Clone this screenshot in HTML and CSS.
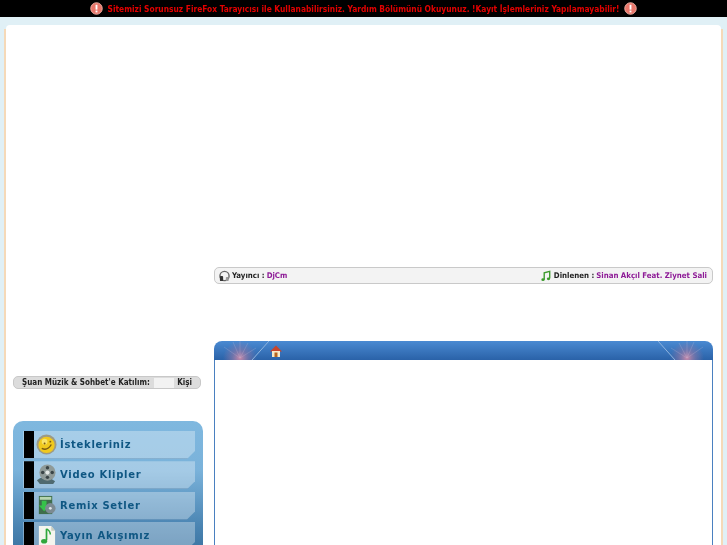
FILE: index.html
```html
<!DOCTYPE html>
<html lang="tr">
<head>
<meta charset="utf-8">
<title>Radyo</title>
<link rel="stylesheet" href="styles.css">
</head>
<body>
<div class="notice">
  <svg class="alert" viewBox="0 0 14 14"><circle cx="7" cy="7" r="6.2" fill="#e8766a" stroke="#f3b3a8"/><rect x="6" y="3" width="2" height="5.2" fill="#fff"/><rect x="6" y="9.2" width="2" height="2" fill="#fff"/></svg>
  <span>Sitemizi Sorunsuz FireFox Tarayıcısı ile Kullanabilirsiniz. Yardım Bölümünü Okuyunuz. !Kayıt İşlemleriniz Yapılamayabilir!</span>
  <svg class="alert" viewBox="0 0 14 14"><circle cx="7" cy="7" r="6.2" fill="#e8766a" stroke="#f3b3a8"/><rect x="6" y="3" width="2" height="5.2" fill="#fff"/><rect x="6" y="9.2" width="2" height="2" fill="#fff"/></svg>
</div>
<div class="sheet">
  <aside class="side">
    <div class="count">
      <span>Şuan Müzik &amp; Sohbet'e Katılım:</span>
      <span class="count-box"></span>
      <span>Kişi</span>
    </div>
    <nav class="menu">
      <a class="item">
        <i class="stub"></i>
        <svg class="ico" viewBox="0 0 22 22"><circle cx="11" cy="11" r="10.500" fill="#9c9a86"/><circle cx="11" cy="11.500" r="8.500" fill="#f0c91e"/><circle cx="9" cy="8" r="3" fill="#f8e46a"/><path d="M6 15q6 3 10-4" fill="none" stroke="#7a5a10" stroke-width="1.500"/><circle cx="9" cy="10" r="1" fill="#7a5a10"/><circle cx="15" cy="8" r="1" fill="#7a5a10"/></svg>
        <span>İstekleriniz</span>
      </a>
      <a class="item">
        <i class="stub"></i>
        <svg class="ico" viewBox="0 0 22 22"><path d="M1 17q5-5 14-2l5 3-2 3H4z" fill="#4f6a70"/><circle cx="12" cy="9" r="8.500" fill="#8f9a98"/><circle cx="12" cy="9" r="2.200" fill="#e4e8e6"/><circle cx="12" cy="4" r="1.800" fill="#3a4446"/><circle cx="7" cy="9" r="1.800" fill="#3a4446"/><circle cx="17" cy="9" r="1.800" fill="#3a4446"/><circle cx="12" cy="14" r="1.800" fill="#3a4446"/></svg>
        <span>Video Klipler</span>
      </a>
      <a class="item">
        <i class="stub"></i>
        <svg class="ico" viewBox="0 0 22 22"><rect x="3" y="1" width="14" height="19" fill="#3f6e4c"/><rect x="4" y="2" width="12" height="3" fill="#b7d6b0"/><path d="M6 6h5v5h3l-5.500 6-5.500-6h3z" fill="#36c24a"/><circle cx="15" cy="14" r="5.500" fill="#7c8a92"/><circle cx="15" cy="14" r="1.500" fill="#dfe5e8"/></svg>
        <span>Remix Setler</span>
      </a>
      <a class="item">
        <i class="stub"></i>
        <svg class="ico" viewBox="0 0 22 22"><path d="M3 1h13l4 5v15H3z" fill="#f4f5ee"/><path d="M16 1v5h4z" fill="#c9cdbf"/><path d="M11 4v12" stroke="#2fa73c" stroke-width="1.800"/><ellipse cx="8.500" cy="17" rx="3.200" ry="2.400" fill="#2fa73c"/><path d="M11 4q4 2 4 6" fill="none" stroke="#2fa73c" stroke-width="1.600"/></svg>
        <span>Yayın Akışımız</span>
      </a>
    </nav>
  </aside>
  <main class="main">
    <div class="player">
      <div class="player-part">
        <svg class="p-ico" viewBox="0 0 12 12"><circle cx="6" cy="6" r="5" fill="none" stroke="#666" stroke-width="1.500"/><rect x="1" y="6" width="3.500" height="5.500" rx="1" fill="#333"/><rect x="7.500" y="7" width="3" height="4.500" rx="1" fill="#999"/></svg>
        <b>Yayıncı :</b> <em>DjCm</em>
      </div>
      <div class="player-part">
        <svg class="p-ico" viewBox="0 0 12 12"><path d="M3.500 10V2.500l6-1.500v7.500" fill="none" stroke="#3c9a2c" stroke-width="1.500"/><ellipse cx="2.200" cy="10" rx="1.800" ry="1.500" fill="#3c9a2c"/><ellipse cx="8.200" cy="9" rx="1.800" ry="1.500" fill="#3c9a2c"/></svg>
        <b>Dinlenen :</b> <em>Sinan Akçıl Feat. Ziynet Sali</em>
      </div>
    </div>
    <section class="panel">
      <header class="panel-head">
        <div class="flare">
          <svg viewBox="0 0 55 19" preserveAspectRatio="none"><defs><radialGradient id="fl" cx="26" cy="17" r="17" gradientUnits="userSpaceOnUse"><stop offset="0" stop-color="#c98aaa"/><stop offset=".5" stop-color="#8a78a8" stop-opacity=".6"/><stop offset="1" stop-color="#8a78a8" stop-opacity="0"/></radialGradient></defs><rect width="55" height="19" fill="url(#fl)"/><path d="M26 17L10 6M26 17L19 1M26 17L26 0M26 17L34 2M26 17L42 7" stroke="#c8bcd8" stroke-opacity=".25"/><path d="M55 0L38 19" stroke="#8fb4de" stroke-width="1"/></svg>
        </div>
        <svg class="home" viewBox="0 0 12 12"><path d="M0 6.500L6 .5l6 6z" fill="#c8452c"/><rect x="2" y="6" width="8" height="6" fill="#f6e9c8"/><rect x="4.500" y="7.500" width="3" height="4.500" fill="#b5651d"/></svg>
        <div class="flare flip">
          <svg viewBox="0 0 55 19" preserveAspectRatio="none"><rect width="55" height="19" fill="url(#fl)"/><path d="M26 17L10 6M26 17L19 1M26 17L26 0M26 17L34 2M26 17L42 7" stroke="#c8bcd8" stroke-opacity=".25"/><path d="M55 0L38 19" stroke="#8fb4de" stroke-width="1"/></svg>
        </div>
      </header>
      <div class="panel-body"></div>
    </section>
  </main>
</div>
</body>
</html>
```
FILE: styles.css
```css
* { box-sizing: border-box; }
html, body { margin: 0; height: 545px; overflow: hidden; }
body { background: #e0f0f6; font-family: "DejaVu Sans", Verdana, sans-serif; font-stretch: condensed; }

.notice { height: 17px; background: #000; color: #e30000; display: flex; align-items: center; justify-content: center; gap: 4px; font-size: 8.350px; font-weight: bold; white-space: nowrap; }
.alert { width: 13px; height: 13px; flex: none; filter: blur(.3px); }
.notice span { filter: blur(.3px); }

.sheet { margin: 8px 6px 0; height: 520px; background: #fff; border-radius: 4px 4px 0 0; display: flex; gap: 11px; padding: 0 8px 0 7px; position: relative; }
.sheet::before, .sheet::after { content: ""; position: absolute; top: 4px; bottom: 0; width: 2px; background: #f5d9b8; }
.sheet::before { left: -2px; }
.sheet::after { right: -2px; }

.side { width: 190px; flex: none; padding-top: 351px; }
.count { width: 188px; height: 13px; background: #dcdcdc; border: 1px solid #c8c8c8; border-radius: 5px; display: flex; align-items: center; font-size: 8px; font-weight: bold; color: #222; padding: 0 8px; white-space: nowrap; filter: blur(.25px); }
.count-box { width: 20px; height: 10px; background: #f2f2f2; margin: 0 auto 0 4px; }

.menu { margin-top: 32px; height: 124px; background: linear-gradient(#7fb8df, #7ab2da 40%, #4a84b2 85%, #3f78a6); border-radius: 10px 10px 0 0; padding: 10px 8px 0 10px; display: flex; flex-direction: column; gap: 2.300px; overflow: hidden; }
.item { height: 28px; background: rgba(255,255,255,.32); border-bottom: 1px solid rgba(40,90,140,.25); display: flex; align-items: center; color: #0f5783; font-size: 10px; font-weight: bold; font-stretch: normal; letter-spacing: .7px; clip-path: polygon(0 0, 100% 0, 100% calc(100% - 8px), calc(100% - 8px) 100%, 0 100%); flex: none; }
.item span { filter: blur(.3px); }
.stub { width: 10px; height: 100%; background: #000; margin-left: 1px; flex: none; }
.ico { width: 21px; height: 21px; margin: 0 3px 0 2px; flex: none; filter: blur(.3px); }

.main { flex: 1; min-width: 0; padding-top: 242px; }
.player { height: 17px; background: #f3f3f3; border: 1px solid #c9c9c9; border-radius: 5px; display: flex; justify-content: space-between; align-items: center; padding: 0 5px 0 4px; font-size: 7.800px; color: #222; white-space: nowrap; }
.player-part { display: flex; align-items: center; gap: 2px; filter: blur(.25px); }
.player-part em { font-style: normal; font-weight: bold; color: #8d1a96; }
.p-ico { width: 11px; height: 12px; }

.panel { margin-top: 57px; }
.panel-head { height: 19px; background: linear-gradient(#4a8ad2, #2a62a8); border-radius: 8px 8px 0 0; display: flex; align-items: center; overflow: hidden; }
.flare { width: 55px; height: 19px; flex: none; }
.flare svg { display: block; width: 100%; height: 100%; }
.flip { margin-left: auto; transform: scaleX(-1); }
.home { width: 12px; height: 12px; margin-left: 1px; filter: blur(.25px); }
.panel-body { height: 185px; background: #fff; border: 1px solid #4a80c0; border-top: 0; border-bottom: 0; }
```
